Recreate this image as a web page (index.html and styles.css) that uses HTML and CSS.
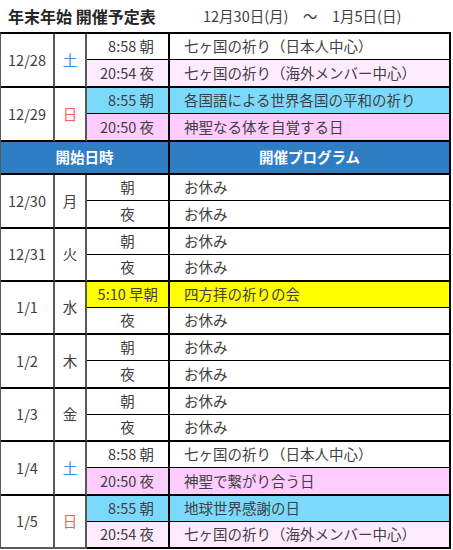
FILE: index.html
```html
<!DOCTYPE html>
<html lang="ja">
<head>
<meta charset="utf-8">
<title>年末年始 開催予定表</title>
<link rel="stylesheet" href="styles.css">
</head>
<body>
<div class="page">
  <header class="title-bar">
    <h1 class="title">年末年始 開催予定表</h1>
    <p class="period">12月30日(月)　～　1月5日(日)</p>
  </header>
  <div class="schedule">
    <div class="group">
      <div class="date">12/28</div>
      <div class="dow sat">土</div>
      <div class="slots">
        <div class="slot"><div class="time">8:58 朝</div><div class="prog">七ヶ国の祈り（日本人中心）</div></div>
        <div class="slot pale"><div class="time">20:54 夜</div><div class="prog">七ヶ国の祈り（海外メンバー中心）</div></div>
      </div>
    </div>
    <div class="group">
      <div class="date">12/29</div>
      <div class="dow sun">日</div>
      <div class="slots">
        <div class="slot cyan"><div class="time">8:55 朝</div><div class="prog">各国語による世界各国の平和の祈り</div></div>
        <div class="slot pink"><div class="time">20:50 夜</div><div class="prog">神聖なる体を自覚する日</div></div>
      </div>
    </div>
    <div class="head">
      <div class="head-time">開始日時</div>
      <div class="head-prog">開催プログラム</div>
    </div>
    <div class="group">
      <div class="date">12/30</div>
      <div class="dow">月</div>
      <div class="slots">
        <div class="slot"><div class="time only">朝</div><div class="prog">お休み</div></div>
        <div class="slot"><div class="time only">夜</div><div class="prog">お休み</div></div>
      </div>
    </div>
    <div class="group short">
      <div class="date">12/31</div>
      <div class="dow">火</div>
      <div class="slots">
        <div class="slot"><div class="time only">朝</div><div class="prog">お休み</div></div>
        <div class="slot"><div class="time only">夜</div><div class="prog">お休み</div></div>
      </div>
    </div>
    <div class="group short">
      <div class="date">1/1</div>
      <div class="dow">水</div>
      <div class="slots">
        <div class="slot yellow"><div class="time early">5:10 早朝</div><div class="prog">四方拝の祈りの会</div></div>
        <div class="slot"><div class="time only">夜</div><div class="prog">お休み</div></div>
      </div>
    </div>
    <div class="group">
      <div class="date">1/2</div>
      <div class="dow">木</div>
      <div class="slots">
        <div class="slot"><div class="time only">朝</div><div class="prog">お休み</div></div>
        <div class="slot"><div class="time only">夜</div><div class="prog">お休み</div></div>
      </div>
    </div>
    <div class="group short">
      <div class="date">1/3</div>
      <div class="dow">金</div>
      <div class="slots">
        <div class="slot"><div class="time only">朝</div><div class="prog">お休み</div></div>
        <div class="slot"><div class="time only">夜</div><div class="prog">お休み</div></div>
      </div>
    </div>
    <div class="group">
      <div class="date">1/4</div>
      <div class="dow sat">土</div>
      <div class="slots">
        <div class="slot"><div class="time">8:58 朝</div><div class="prog">七ヶ国の祈り（日本人中心）</div></div>
        <div class="slot pink"><div class="time">20:50 夜</div><div class="prog">神聖で繋がり合う日</div></div>
      </div>
    </div>
    <div class="group short last">
      <div class="date">1/5</div>
      <div class="dow sun">日</div>
      <div class="slots">
        <div class="slot cyan"><div class="time">8:55 朝</div><div class="prog">地球世界感謝の日</div></div>
        <div class="slot pale"><div class="time">20:54 夜</div><div class="prog">七ヶ国の祈り（海外メンバー中心）</div></div>
      </div>
    </div>
  </div>
</div>
</body>
</html>
```
FILE: styles.css
```css
html, body {
  margin: 0;
  padding: 0;
  background: #fff;
}
body {
  font-family: "Noto Sans CJK JP", "Noto Sans", sans-serif;
  color: #404040;
  font-size: 14.5px;
  line-height: 1;
}
.title-bar {
  display: flex;
  align-items: center;
  height: 32px;
  padding-left: 8px;
}
.title {
  margin: 0;
  width: 195px;
  font-size: 16px;
  font-weight: 700;
  color: #262626;
}
.period {
  margin: 0;
  font-size: 14.5px;
  color: #404040;
}
.schedule {
  width: 451px;
  box-sizing: border-box;
  border-top: 2px solid #000;
  border-left: 1px solid #595959;
}
.group {
  display: flex;
  height: 54px;
}
.group.short {
  height: 53px;
}
.date,
.dow {
  box-sizing: border-box;
  border-right: 2px solid #595959;
  border-bottom: 2px solid #000;
  display: flex;
  align-items: center;
  justify-content: center;
}
.date {
  width: 54px;
}
.dow {
  width: 32px;
}
.group.last .date,
.group.last .dow {
  border-bottom-color: #595959;
}
.sat {
  color: #3b8ed8;
}
.sun {
  color: #ff5a5a;
}
.slots {
  flex: 1;
  display: flex;
  flex-direction: column;
  border-bottom: 2px solid #000;
}
.slot {
  display: flex;
  flex: 1;
}
.slot:first-child {
  flex: none;
  height: 26px;
  box-sizing: border-box;
  border-bottom: 1px solid #000;
}
.time {
  width: 83px;
  box-sizing: border-box;
  border-right: 2px solid #000;
  display: flex;
  align-items: center;
  justify-content: flex-end;
  padding-right: 14px;
}
.time.only {
  justify-content: center;
  padding-right: 0;
}
.time.early {
  padding-right: 10px;
}
.prog {
  flex: 1;
  border-right: 2px solid #000;
  display: flex;
  align-items: center;
  padding-left: 14px;
}
.pale {
  background: #ffebff;
}
.pink {
  background: #ffccff;
}
.cyan {
  background: #7bdafc;
}
.yellow {
  background: #ffff00;
}
.head {
  display: flex;
  height: 33px;
  box-sizing: border-box;
  background: #2f7dc3;
  color: #fff;
  font-weight: 700;
  border-bottom: 2px solid #000;
}
.head-time {
  width: 169px;
  box-sizing: border-box;
  border-right: 2px solid #000;
  display: flex;
  align-items: center;
  justify-content: center;
}
.head-prog {
  flex: 1;
  border-right: 2px solid #000;
  display: flex;
  align-items: center;
  justify-content: center;
}
```
